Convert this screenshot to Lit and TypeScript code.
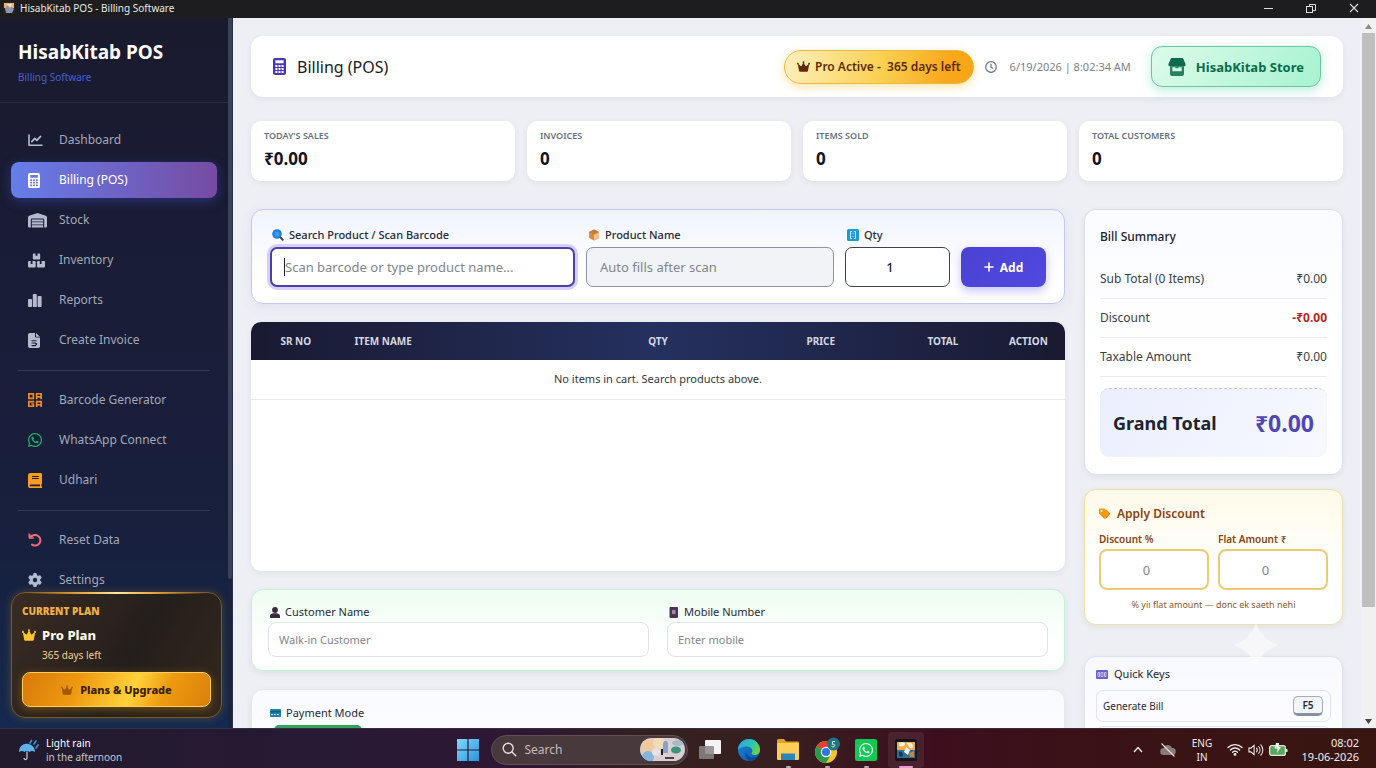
import { LitElement, html, css, nothing } from "lit";
import { customElement, state } from "lit/decorators.js";
import { classMap } from "lit/directives/class-map.js";

const CROWN =
  "M309 106c11.4-7 19-19.7 19-34c0-22.1-17.9-40-40-40s-40 17.9-40 40c0 14.4 7.6 27 19 34L209.7 220.6c-9.1 18.2-32.7 23.4-48.6 10.7L72 160c5-6.7 8-15 8-24c0-22.1-17.9-40-40-40S0 113.9 0 136s17.9 40 40 40c.2 0 .5 0 .7 0L86.4 427.4c5.5 30.4 32 52.6 63 52.6l277.2 0c30.9 0 57.4-22.1 63-52.6L535.3 176c.2 0 .5 0 .7 0c22.1 0 40-17.9 40-40s-17.9-40-40-40s-40 17.9-40 40c0 9 3 17.3 8 24l-89.1 71.3c-15.9 12.7-39.5 7.5-48.6-10.7L309 106z";
const GEAR =
  "M495.9 166.6c3.2 8.7 .5 18.4-6.4 24.6l-43.3 39.4c1.1 8.3 1.7 16.8 1.7 25.4s-.6 17.1-1.7 25.4l43.3 39.4c6.9 6.2 9.6 15.9 6.4 24.6c-4.4 11.9-9.7 23.3-15.8 34.3l-4.7 8.1c-6.6 11-14 21.4-22.1 31.2c-5.9 7.2-15.7 9.6-24.5 6.8l-55.7-17.7c-13.4 10.3-28.2 18.9-44 25.4l-12.5 57.1c-2 9.1-9 16.3-18.2 17.8c-13.8 2.3-28 3.5-42.5 3.5s-28.7-1.2-42.5-3.5c-9.2-1.5-16.2-8.7-18.2-17.8l-12.5-57.1c-15.8-6.5-30.6-15.1-44-25.4L83.1 425.9c-8.8 2.8-18.6 .3-24.5-6.8c-8.1-9.8-15.5-20.2-22.1-31.2l-4.7-8.1c-6.1-11-11.4-22.4-15.8-34.3c-3.2-8.7-.5-18.4 6.4-24.6l43.3-39.4C64.6 273.1 64 264.6 64 256s.6-17.1 1.7-25.4L22.4 191.2c-6.9-6.2-9.6-15.9-6.4-24.6c4.4-11.9 9.7-23.3 15.8-34.3l4.7-8.1c6.6-11 14-21.4 22.1-31.2c5.9-7.2 15.7-9.6 24.5-6.8l55.7 17.7c13.4-10.3 28.2-18.9 44-25.4l12.5-57.1c2-9.1 9-16.3 18.2-17.8C227.3 1.2 241.5 0 256 0s28.7 1.2 42.5 3.5c9.2 1.5 16.2 8.7 18.2 17.8l12.5 57.1c15.8 6.5 30.6 15.1 44 25.4l55.7-17.7c8.8-2.8 18.6-.3 24.5 6.8c8.1 9.8 15.5 20.2 22.1 31.2l4.7 8.1c6.1 11 11.4 22.4 15.8 34.3zM256 336a80 80 0 1 0 0-160 80 80 0 1 0 0 160z";
const WHATSAPP =
  "M380.9 97.1C339 55.1 283.2 32 223.9 32c-122.4 0-222 99.6-222 222 0 39.1 10.2 77.3 29.6 111L0 480l117.7-30.9c32.4 17.7 68.9 27 106.1 27h.1c122.3 0 224.1-99.6 224.1-222 0-59.3-25.2-115-67.1-157zm-157 341.6c-33.2 0-65.7-8.9-94-25.7l-6.7-4-69.8 18.3L72 359.2l-4.4-7c-18.5-29.4-28.2-63.3-28.2-98.2 0-101.7 82.8-184.5 184.6-184.5 49.3 0 95.6 19.2 130.4 54.1 34.8 34.9 56.2 81.2 56.1 130.5 0 101.8-84.9 184.6-186.6 184.6zm101.2-138.2c-5.5-2.8-32.8-16.2-37.9-18-5.1-1.9-8.8-2.8-12.5 2.8-3.7 5.6-14.3 18-17.6 21.8-3.2 3.7-6.5 4.2-12 1.4-32.6-16.3-54-29.1-75.5-66-5.7-9.8 5.7-9.1 16.3-30.3 1.8-3.7.9-6.9-.5-9.7-1.4-2.8-12.5-30.1-17.1-41.2-4.5-10.8-9.1-9.3-12.5-9.5-3.2-.2-6.9-.2-10.6-.2-3.7 0-9.7 1.4-14.8 6.9-5.1 5.6-19.4 19-19.4 46.3 0 27.3 19.9 53.7 22.6 57.4 2.8 3.7 39.1 59.7 94.8 83.8 35.2 15.2 49 16.5 66.6 13.9 10.7-1.6 32.8-13.4 37.4-26.4 4.6-13 4.6-24.1 3.2-26.4-1.3-2.5-5-3.9-10.5-6.6z";

const crown = (w: number, h: number) =>
  html`<svg class="ico" width=${w} height=${h} viewBox="0 24 576 464" preserveAspectRatio="none" fill="currentColor"><path d=${CROWN} /></svg>`;

const calculator = (w: number, h: number) => html`
  <svg class="ico" width=${w} height=${h} viewBox="0 0 12 16" preserveAspectRatio="none" fill="currentColor">
    <path
      fill-rule="evenodd"
      d="M2 0h8a2 2 0 0 1 2 2v12a2 2 0 0 1-2 2H2a2 2 0 0 1-2-2V2a2 2 0 0 1 2-2zm.2 2v3h7.600V2zm0 4.600v1.800h1.900V6.600zm2.900 0v1.800h1.800V6.600zm2.800 0v1.800h1.900V6.600zM2.200 9.400v1.800h1.900V9.400zm2.900 0v1.800h1.800V9.400zm2.800 0v1.800h1.900V9.400zM2.200 12.200V14h1.900v-1.800zm2.900 0V14h1.800v-1.800zm2.800 0V14h1.900v-1.800z"
    />
  </svg>
`;

const navIcons: Record<string, unknown> = {
  dashboard: html`<svg class="ico" width="15" height="13" viewBox="0 0 15 13" fill="none" stroke="currentColor" stroke-linecap="round" stroke-linejoin="round">
    <path stroke-width="1.6" d="M1 1v10.2h13" /><path stroke-width="1.7" d="M3.8 7.6l3-3.2 2 1.9 3.8-4" />
  </svg>`,
  billing: calculator(12, 15),
  stock: html`<svg class="ico" width="19" height="15" viewBox="0 0 19 15" fill="currentColor">
    <path fill-rule="evenodd" d="M0 13.500V4.400a1.800 1.800 0 0 1 1.100-1.600L8.800.2a2 2 0 0 1 1.400 0l7.700 2.600A1.800 1.800 0 0 1 19 4.400v9.100a1 1 0 0 1-1 1h-1.800V6.600a1 1 0 0 0-1-1H3.800a1 1 0 0 0-1 1v7.900H1a1 1 0 0 1-1-1z" />
    <path d="M3.800 6.400h11.400v2.200H3.800zM3.800 9.300h11.400v2.200H3.800zM3.800 12.200h11.400v2.300H3.800z" />
  </svg>`,
  inventory: html`<svg class="ico" width="17" height="15" viewBox="0 0 17 15" fill="currentColor">
    <path d="M4.800 1.500a1 1 0 0 1 1-1h1.700v2.200h2V.5h1.700a1 1 0 0 1 1 1v4a1 1 0 0 1-1 1H5.800a1 1 0 0 1-1-1zM0 9a1 1 0 0 1 1-1h1.700v3h1.800V8h2.200a1 1 0 0 1 1 1v4.500a1 1 0 0 1-1 1H1a1 1 0 0 1-1-1zM9 9a1 1 0 0 1 1-1h1.800v3h1.800V8H16a1 1 0 0 1 1 1v4.500a1 1 0 0 1-1 1h-6a1 1 0 0 1-1-1z" />
  </svg>`,
  reports: html`<svg class="ico" width="14" height="13" viewBox="0 0 14 13" fill="currentColor">
    <rect x="0" y="5" width="4" height="8" rx=".8" /><rect x="4.800" y="0" width="4" height="13" rx=".8" /><rect x="9.600" y="2" width="4" height="11" rx=".8" />
  </svg>`,
  invoice: html`<svg class="ico" width="12" height="15" viewBox="0 0 12 15" fill="currentColor">
    <path fill-rule="evenodd" d="M1.800 0H7v3.600a1 1 0 0 0 1 1h4v8.600A1.800 1.800 0 0 1 10.200 15H1.800A1.800 1.800 0 0 1 0 13.200V1.800A1.800 1.800 0 0 1 1.800 0zM3.500 7.200v1.100h5V7.200zm0 2.200v1h3.300l1 .9-.8.800H3.500v1.100h4l1.600-1.600v-1L7.500 9.400z" />
    <path d="M8 0l4 3.700H8z" />
  </svg>`,
  barcode: html`<svg class="ico" width="14" height="14" viewBox="0 0 14 14" fill="currentColor">
    <path fill-rule="evenodd" d="M0 0h6.200v6.200H0zM1.700 1.700v2.800h2.800V1.700zM7.800 0H14v6.200h-1.700V4.700H9.500v1.500H7.800zM9.500 1.600v1.500h2.800V1.600zM0 7.800h6.200v1.600H1.700v3h2.800v-.8H3.200v-1.400h3V14H0zM7.800 7.800H14V14h-1.700v-1.500H9.500V14H7.800zM9.500 9.400v1.500h2.800V9.400z" />
  </svg>`,
  whatsapp: html`<svg class="ico" width="14" height="14" viewBox="0 32 448 448" fill="currentColor"><path d=${WHATSAPP} /></svg>`,
  book: html`<svg class="ico" width="14" height="15" viewBox="0 0 14 15" fill="currentColor">
    <path fill-rule="evenodd" d="M2.600 0H13a1 1 0 0 1 1 1v9.500a1 1 0 0 1-.6.9v1.900H14V15H2.600A2.600 2.600 0 0 1 0 12.400V2.600A2.600 2.600 0 0 1 2.600 0zM4 3v1.100h6.700V3zm0 2.100v1h6.700v-1zM2.600 11.500a.9.9 0 0 0 0 1.800H12v-1.800z" />
  </svg>`,
  reset: html`<svg class="ico" width="14" height="14" viewBox="0 0 14 14" fill="none" stroke="currentColor" stroke-linecap="round">
    <path stroke-width="2" d="M2.800 4.200A5.300 5.300 0 1 1 4 11.600" /><path fill="currentColor" stroke-width="1" stroke-linejoin="round" d="M1 .9v4.300h4.300z" />
  </svg>`,
  settings: html`<svg class="ico" width="14" height="14" viewBox="0 0 512 512" fill="currentColor"><path d=${GEAR} /></svg>`,
};

interface NavItem {
  id: string;
  label: string;
  tone?: string;
}

const NAV: NavItem[][] = [
  [
    { id: "dashboard", label: "Dashboard" },
    { id: "billing", label: "Billing (POS)" },
    { id: "stock", label: "Stock" },
    { id: "inventory", label: "Inventory" },
    { id: "reports", label: "Reports" },
    { id: "invoice", label: "Create Invoice" },
  ],
  [
    { id: "barcode", label: "Barcode Generator", tone: "orange" },
    { id: "whatsapp", label: "WhatsApp Connect", tone: "green" },
    { id: "book", label: "Udhari", tone: "amber" },
  ],
  [
    { id: "reset", label: "Reset Data", tone: "red" },
    { id: "settings", label: "Settings" },
  ],
];

const STATS = [
  ["TODAY'S SALES", "₹0.00"],
  ["INVOICES", "0"],
  ["ITEMS SOLD", "0"],
  ["TOTAL CUSTOMERS", "0"],
];

const base = css`
  *, *::before, *::after { box-sizing: border-box; }
  :host { font-family: "Noto Sans", "Open Sans", sans-serif; }
  svg { display: block; flex: none; }
  button, input { font: inherit; color: inherit; }
  button { border: 0; background: none; padding: 0; margin: 0; }
  a { color: inherit; text-decoration: none; }
  h1, h2, p, dl, dd, dt { margin: 0; font-weight: inherit; font-size: inherit; }
`;

@customElement("pos-sidebar")
export class PosSidebar extends LitElement {
  @state() private active = "billing";

  static styles = [
    base,
    css`
      :host {
        display: flex;
        min-height: 0;
        background: linear-gradient(180deg, #1a1a2e 0%, #191d38 45%, #17203e 75%, #142a50 100%);
        color: #a3a8b8;
      }
      .column { flex: 1; min-width: 0; display: flex; flex-direction: column; min-height: 0; }
      .track { width: 5px; background: #1c2340; border-right: 1px solid #2a3048; }
      .thumb { height: 79%; background: #3b4158; border-radius: 0 0 3px 3px; }
      .brand { padding: 20px 18px 18px; height: 85px; border-bottom: 1px solid #292a42; }
      .name { font-size: 19px; line-height: 28px; font-weight: 700; color: #fff; white-space: nowrap; }
      .sub { font-size: 10px; line-height: 16px; margin-top: 3px; color: #4560d8; }
      nav { flex: 1; min-height: 0; overflow: hidden; padding: 19px 11px 0; display: flex; flex-direction: column; gap: 4px; }
      .item {
        flex: none; height: 36px; display: flex; align-items: center; border-radius: 8px;
        font-size: 12px; line-height: 18px; padding-left: 17px;
      }
      .glyph { width: 31px; flex: none; color: #b4bbcf; }
      .orange { color: #f08a24; }
      .green { color: #22b566; }
      .amber { color: #ff9c1a; }
      .red { color: #ee6a7c; }
      .item.active { color: #fff; background: linear-gradient(90deg, #667eea, #764ba2); box-shadow: 0 3px 12px rgba(70, 80, 220, 0.4); }
      .item.active .glyph { color: #fff; }
      .rule { flex: none; height: 1px; margin: 8px 7px 7px; background: #343a55; }
      .plan {
        position: relative; margin: 0 6px 10px 11px; padding: 10px; border: 1px solid #7a5a25; border-radius: 14px;
        background: linear-gradient(120deg, #3a2c22, #241f1c 55%, #33281c); box-shadow: 0 0 8px rgba(190, 130, 20, 0.35);
      }
      .plan::before {
        content: ""; position: absolute; left: 14px; right: 14px; top: -1px; height: 2px;
        background: linear-gradient(90deg, transparent, #e9a63a 30%, #ffe9a8 50%, #e9a63a 70%, transparent);
      }
      .caption { font-size: 10px; line-height: 16px; font-weight: 900; color: #f0b040; }
      .planname { display: flex; align-items: center; gap: 6px; margin-top: 6px; font-size: 13px; line-height: 20px; font-weight: 800; color: #fff8e6; }
      .planname .ico { color: #fcc62f; }
      .left { font-size: 10px; line-height: 16px; margin: 2px 0 9px 20px; color: #f2d28a; }
      .upgrade {
        width: 100%; height: 35px; display: flex; align-items: center; justify-content: center; gap: 7px; border-radius: 8px;
        border: 1px solid #ffcf5a; color: #3a2000; font-size: 11px; font-weight: 800; line-height: 16px;
        background: linear-gradient(115deg, #d9790a 0%, #ee9a10 30%, #ffd23a 58%, #ee9a10 75%, #d9800a 100%);
        box-shadow: 0 2px 8px rgba(230, 150, 10, 0.4);
      }
      .upgrade .ico { color: #a4560a; }
    `,
  ];

  render() {
    return html`
      <div class="column">
        <header class="brand">
          <h1 class="name">HisabKitab POS</h1>
          <p class="sub">Billing Software</p>
        </header>
        <nav aria-label="Main">
          ${NAV.map(
            (group, i) => html`
              ${i ? html`<div class="rule"></div>` : nothing}
              ${group.map(
                (n) => html`<a
                  href="#${n.id}"
                  class=${classMap({ item: true, active: n.id === this.active })}
                  @click=${() => (this.active = n.id)}
                  ><span class="glyph ${n.tone ?? ""}">${navIcons[n.id]}</span>${n.label}</a
                >`,
              )}
            `,
          )}
        </nav>
        <section class="plan">
          <p class="caption">CURRENT PLAN</p>
          <p class="planname">${crown(14, 12)}Pro Plan</p>
          <p class="left">365 days left</p>
          <button class="upgrade" type="button">${crown(12, 10)}Plans &amp; Upgrade</button>
        </section>
      </div>
      <div class="track"><div class="thumb"></div></div>
    `;
  }
}

@customElement("pos-taskbar")
export class PosTaskbar extends LitElement {
  static styles = [
    base,
    css`
      :host {
        display: grid; grid-template-columns: 1fr auto 1fr; align-items: center; color: #f0ecee;
        background: linear-gradient(90deg, #211b2d 0%, #271a34 22%, #2e1734 38%, #33211f 47%, #371f1f 56%, #3d0f1e 68%, #3a1216 80%, #391610 100%);
        border-top: 1px solid #35303f; padding-top: 2px; font-size: 11px; line-height: 14px;
      }
      .weather { display: flex; align-items: center; gap: 7px; padding-left: 18px; font-size: 10px; color: #c9c4cc; text-align: left; }
      .weather b { display: block; font-weight: 400; color: #fff; }
      .weather small { font-size: 10px; }
      .apps { display: flex; align-items: center; margin-left: 3px; }
      .app { position: relative; width: 39px; height: 36px; display: grid; place-items: center; border-radius: 4px; }
      .app.open::after, .app.current::after { content: ""; position: absolute; bottom: 0; left: 17px; width: 5px; height: 2px; border-radius: 1px; background: #b9a9ae; }
      .app.current { width: 36px; margin-left: 2px; background: rgba(255, 255, 255, 0.07); }
      .app.current::after { left: 11px; width: 14px; background: #e79ad6; }
      .start { width: 24px; margin-right: 11px; }
      .search {
        width: 197px; height: 30px; margin-right: 3px; display: flex; align-items: center; gap: 8px; border-radius: 15px; padding: 0 2px 0 10px;
        border: 1px solid #5f4f55; background: #48393d; color: #c4bcbf;
      }
      .search input { flex: 1; min-width: 0; border: 0; background: none; outline: 0; padding: 0; font-size: 12px; line-height: 18px; }
      .search input::placeholder { color: #c4bcbf; opacity: 1; }
      .tray { justify-self: end; display: flex; align-items: center; padding-right: 17px; text-align: center; white-space: nowrap; }
      .lang { width: 26px; margin: 0 12px 0 13px; font-size: 10px; }
      .clock { min-width: 60px; text-align: right; font-size: 11px; margin-left: 6px; }
      .tray > svg { margin-right: 5px; }
      .tray > .chev { margin-right: 17px; }
      .tray > .cloud { margin-right: 0; }
    `,
  ];

  render() {
    return html`
      <button class="weather" type="button">
        <svg width="21" height="22" viewBox="0 0 21 22">
          <path d="M1 13C1 7 6 4 10 5c4 .5 7 3.500 7 8-2-1.500-4-1.500-5.300 0C10 11.500 7.500 11.500 6.300 13 4.800 11.700 3 11.700 1 13z" fill="#5db2ee" />
          <path d="M9 12.500V19a1.500 1.500 0 0 1-3 0" fill="none" stroke="#b9c4d4" stroke-width="1.300" />
          <path d="M12 4l1.500-2.500M16 5l2-3M18 9l2-3" stroke="#3b88d8" stroke-width="1.700" stroke-linecap="round" />
        </svg>
        <span><b>Light rain</b><small>in the afternoon</small></span>
      </button>
      <div class="apps">
        <button class="app start" type="button" aria-label="Start">
          <svg width="22" height="22" viewBox="0 0 22 22">
            <defs><linearGradient id="w" x2="1" y2="1"><stop stop-color="#7fd8fb" /><stop offset="1" stop-color="#2a95dd" /></linearGradient></defs>
            <path fill="url(#w)" d="M0 0h10.400v10.400H0zM11.600 0H22v10.400H11.600zM0 11.600h10.400V22H0zM11.600 11.600H22V22H11.600z" />
          </svg>
        </button>
        <label class="search">
          <svg width="15" height="15" viewBox="0 0 15 15" fill="none" stroke="#e6e0e2" stroke-width="1.400" stroke-linecap="round"><circle cx="6.200" cy="6.200" r="5" /><path d="M10 10l3.800 3.800" /></svg>
          <input type="text" placeholder="Search" aria-label="Search" />
          <svg width="45" height="23" viewBox="0 0 45 23">
            <defs><clipPath id="p"><rect width="45" height="23" rx="11.500" /></clipPath></defs>
            <g clip-path="url(#p)">
              <rect width="45" height="23" fill="#d9cfd0" /><circle cx="9" cy="9" r="8" fill="#f0c9a0" /><circle cx="19" cy="5" r="6" fill="#f1dcb8" />
              <circle cx="8" cy="19" r="6" fill="#84b5dc" /><path d="M23 15V6l1-3h3l1 3v9z" fill="#8aa0c4" /><rect x="21" y="11" width="2" height="6" fill="#222" />
              <ellipse cx="36" cy="12" rx="5" ry="3.500" fill="#38927c" /><ellipse cx="38" cy="5" rx="6" ry="3" fill="#a9bad0" /><path d="M25 19h9v2h-9z" fill="#45414c" /><circle cx="16" cy="14" r="4" fill="#ecdfe4" />
            </g>
          </svg>
        </label>
        <button class="app" type="button" aria-label="Task view">
          <svg width="22" height="20" viewBox="0 0 22 20"><rect x="6" y="0" width="16" height="14" rx="1" fill="#f4f2f2" /><rect x="0" y="6" width="15" height="13" rx="1" fill="#8d8686" opacity=".85" /></svg>
        </button>
        <button class="app" type="button" aria-label="Edge">
          <svg width="22" height="22" viewBox="0 0 22 22">
            <defs>
              <linearGradient id="e1" x2="1" y2=".6"><stop stop-color="#2aa3e8" /><stop offset=".6" stop-color="#2fc4b0" /><stop offset="1" stop-color="#63d44a" /></linearGradient>
              <linearGradient id="e2" y2="1"><stop stop-color="#1b86d8" /><stop offset="1" stop-color="#0c58b0" /></linearGradient>
            </defs>
            <circle cx="11" cy="11" r="11" fill="url(#e2)" />
            <path fill="url(#e1)" d="M0 11A11 11 0 0 1 22 11c0 3.500-2.500 5-5.200 5-2.500 0-3.600-1-3.300-2 .8-1 1-2 .8-3C13.800 8.500 11 7.500 8.500 7.500 4.500 7.500 1 9 0 11z" />
            <path fill="#0d4a94" d="M8 12c0 4 3.500 6.500 7.500 6.500 1.500 0 2.800-.3 4-1C17.500 20 15 21.800 12 22 8 20.500 6.500 16 8 12z" />
          </svg>
        </button>
        <button class="app open" type="button" aria-label="File Explorer">
          <svg width="22" height="21" viewBox="0 0 22 21"><path fill="#e0a021" d="M0 1.500A1.500 1.500 0 0 1 1.500 0H7l2 2.500h12A1 1 0 0 1 22 3.500V10H0z" /><rect y="4" width="22" height="17" rx="1.200" fill="#fbcf57" /><path fill="#2a86b8" d="M4 14.500h14V21H4z" /></svg>
        </button>
        <button class="app open" type="button" aria-label="Chrome">
          <svg width="28" height="26" viewBox="0 0 28 26">
            <circle cx="13" cy="15" r="11" fill="#f5c32c" /><path d="M13 15L3.500 9.500A11 11 0 0 1 22.500 9.500z" fill="#e0412f" /><path d="M13 15L3.500 9.500A11 11 0 0 0 13 26l3.500-6z" fill="#2b9a4b" />
            <circle cx="13" cy="15" r="5.200" fill="#fff" /><circle cx="13" cy="15" r="4.100" fill="#3275e0" /><circle cx="20.500" cy="7" r="6.500" fill="#1f7683" />
            <path d="M18.500 9.500c2 1 3.500 0 3.300-1.300-.3-1.200-1.800-1.200-2.600-.7l.4-3h2.600" stroke="#d7f0f0" fill="none" />
          </svg>
        </button>
        <button class="app open" type="button" aria-label="WhatsApp">
          <svg width="22" height="22" viewBox="0 0 22 22"><rect width="22" height="22" rx="2" fill="#12c956" /><svg x="4" y="4" width="14" height="14" viewBox="0 32 448 448" fill="#e9fff0"><path d=${WHATSAPP} /></svg></svg>
        </button>
        <button class="app current" type="button" aria-label="HisabKitab POS">
          <svg width="22" height="22" viewBox="0 0 22 22"><rect width="22" height="22" rx="2.500" fill="#16141c" /><path d="M2 3h18v8H2z" fill="#f0ae48" /><path d="M2 11h18v8H2z" fill="#2f6f9c" /><path d="M4 4c2-2 6-1 6 1s-3 3-6 2zM12 4c3-1 6 0 6 3s-3 3-4 1z" fill="#f7eedd" /><path d="M11 8l4 3-2 5-4-3z" fill="#f3f1ee" /><path d="M4 13c2-1 4 1 4 3s-3 2-4 1z" fill="#1b3550" /><path d="M14 14l5-2v6h-4z" fill="#d5822a" /></svg>
        </button>
      </div>
      <div class="tray">
        <svg class="chev" width="10" height="7" viewBox="0 0 10 7" fill="none" stroke="#eee" stroke-width="1.300"><path d="M1 6l4-4.500L9 6" /></svg>
        <svg class="cloud" width="16" height="16" viewBox="0 0 16 16"><path d="M4 13a3.500 3.500 0 0 1-.5-7A4.500 4.500 0 0 1 12 6a3.500 3.500 0 0 1 .5 7z" fill="#8a7c7c" /><path d="M1.500 1.500l13 13" stroke="#e4dada" stroke-width="1.300" /></svg>
        <div class="lang">ENG<br />IN</div>
        <svg width="16" height="13" viewBox="0 0 16 13" fill="none" stroke="#f2eeee" stroke-width="1.300" stroke-linecap="round"><path d="M1 4.500a10 10 0 0 1 14 0M3.300 7a6.500 6.500 0 0 1 9.400 0M5.600 9.300a3.400 3.400 0 0 1 4.800 0" /><circle cx="8" cy="11.400" r=".8" fill="#f2eeee" /></svg>
        <svg width="16" height="14" viewBox="0 0 17 14" fill="none" stroke="#f2eeee" stroke-width="1.100" stroke-linecap="round"><path d="M1 5v4h2l3.500 3V2L3 5zM9 5a3 3 0 0 1 0 4M11.300 3.300a5.500 5.500 0 0 1 0 7.400M13.600 1.500a8 8 0 0 1 0 11" /></svg>
        <svg width="19" height="13" viewBox="0 0 19 13"><rect x=".6" y="2.600" width="15.800" height="9.800" rx="2" fill="#5aa860" stroke="#dfe8df" stroke-width="1.200" /><path d="M17 6h1.500v3H17z" fill="#dfe8df" /><path d="M7 0h3v4h2l-4 6 .5-4.500H5.500z" fill="#e9efe9" /></svg>
        <div class="clock">08:02<br />19-06-2026</div>
      </div>
    `;
  }
}

@customElement("app-root")
export class AppRoot extends LitElement {
  static styles = [
    base,
    css`
      :host { display: grid; height: 100vh; grid-template-rows: 18px minmax(0, 1fr) 40px; overflow: hidden; color: #1e2330; }
      .titlebar { display: flex; align-items: center; gap: 5px; padding: 0 16px 3px 3px; background: #1d1c1e; color: #e8e8e8; font-size: 10px; line-height: 14px; }
      .titlebar p { flex: 1; }
      .winctl { display: flex; gap: 31px; color: #ddd; }
      .body { display: grid; grid-template-columns: 233px minmax(0, 1fr) 15px; min-height: 0; }
      .scroll { background: #f1f1f2; display: flex; flex-direction: column; align-items: center; padding: 6px 0 4px; }
      .bar { width: 13px; flex: 0 0 82%; margin: 4px 0 auto; background: #bfbfc0; }
      main { position: relative; overflow: hidden; padding: 18px 18px 0; background: #eeeff4; }
      .card { background: #fff; border-radius: 12px; box-shadow: 0 2px 6px rgba(30, 40, 80, 0.07); }
      .top { display: flex; align-items: center; height: 61px; padding: 0 22px; }
      .top .calc { color: #4a35b4; }
      .heading { flex: 1; margin-left: 11px; font-size: 16px; line-height: 24px; font-weight: 400; color: #161a26; }
      .pro {
        display: flex; align-items: center; gap: 5px; height: 34px; padding: 0 12px; border-radius: 17px; border: 1px solid #e6b84a; white-space: pre;
        color: #5b2c05; font-size: 12px; font-weight: 600; line-height: 18px;
        background: linear-gradient(100deg, #fef0bd 0%, #fbd153 50%, #f9a81c 85%, #f8a415 100%); box-shadow: 0 3px 10px rgba(251, 191, 36, 0.4);
      }
      .now { display: flex; align-items: center; gap: 13px; margin: 0 20px 0 11px; font-size: 11px; line-height: 18px; color: #7d8188; }
      .store {
        display: flex; align-items: center; gap: 10px; height: 41px; padding: 0 16px; border-radius: 11px; border: 1px solid #6cc4a0;
        background: linear-gradient(120deg, #dcfbea, #a7f3cf); color: #0b6b4c; font-size: 13px; font-weight: 700; line-height: 20px;
        box-shadow: 0 3px 12px rgba(52, 211, 153, 0.35);
      }
      .stats { display: grid; grid-template-columns: repeat(4, 1fr); gap: 12px; margin-top: 24px; }
      .stat { height: 60px; padding: 8px 13px; border-radius: 10px; }
      .stat dt { font-size: 9px; line-height: 14px; color: #64727f; font-weight: 600; }
      .stat dd { font-size: 17px; line-height: 24px; margin-top: 4px; font-weight: 700; color: #11141f; }
      .board { display: grid; grid-template-columns: minmax(0, 1fr) 259px; gap: 19px; margin-top: 28px; align-items: start; }
      .left { display: grid; gap: 18px; }
      .right { display: grid; gap: 14px; }
      label, .label { display: flex; align-items: center; gap: 5px; font-size: 11px; line-height: 18px; font-weight: 500; color: #262c38; }
      .entry {
        display: grid; grid-template-columns: minmax(0, 305fr) minmax(0, 248fr) 105px 85px; gap: 11px; align-items: end; padding: 16px 18px;
        border: 1px solid #c3c8f0; background: linear-gradient(180deg, #f1f4ff, #fff 70%); box-shadow: 0 3px 12px rgba(99, 102, 241, 0.1);
      }
      .field { display: grid; gap: 3px; min-width: 0; position: relative; }
      .entry label { padding-left: 2px; }
      input { min-width: 0; width: 100%; outline: 0; background: #fff; }
      .entry input { height: 40px; border-radius: 7px; border: 1px solid #3b4252; padding: 0 13px; font-size: 13px; line-height: 20px; }
      input::placeholder { color: #82868c; opacity: 1; }
      .entry .scan { border: 2px solid #4b3fae; box-shadow: 0 0 0 3px #d6d0f8; }
      .entry .auto { background: #f1f3f6; border-color: #8a94a6; }
      .entry .qty { text-align: center; font-weight: 500; padding: 0 11px; }
      .pair input { text-align: center; }
      .caret { position: absolute; left: 14px; bottom: 11px; width: 1px; height: 18px; background: #222; }
      .add {
        height: 40px; border-radius: 8px; display: flex; align-items: center; justify-content: center; gap: 6px; color: #fff; font-size: 12px; font-weight: 700;
        background: linear-gradient(135deg, #4a42d2, #5148e0); box-shadow: 0 4px 10px rgba(79, 70, 229, 0.32);
      }
      .cart { min-height: 249px; overflow: hidden; border-radius: 10px; }
      table { width: 100%; border-collapse: collapse; table-layout: fixed; }
      thead tr { background: linear-gradient(90deg, #191a31, #24305f 50%, #191a31); }
      th { height: 38px; padding: 0; font-size: 10px; line-height: 16px; font-weight: 700; color: #d4d7e2; }
      .c-sr { width: 11%; }
      .c-item { width: 28%; text-align: left; padding-left: 14px; }
      .c-qty { width: 22%; }
      .c-price { width: 18%; }
      .c-total { width: 12%; }
      .c-act { width: 9%; }
      td { height: 39px; padding: 0; text-align: center; font-size: 11px; line-height: 18px; color: #33383f; border-bottom: 1px solid #e7e9ed; }
      .customer {
        display: grid; grid-template-columns: 1fr 1fr; gap: 18px; padding: 13px 16px; border: 1px solid #c6efd5;
        background: linear-gradient(180deg, #eefdf2, #fff 70%);
      }
      .customer .field { gap: 1px; }
      .customer label, .pay .label { padding-left: 2px; font-weight: 400; }
      .customer input { height: 35px; border-radius: 8px; border: 1px solid #dfe2e8; padding: 0 10px; font-size: 11px; line-height: 18px; }
      .pay { padding: 14px 16px; border: 1px solid #e3e6f3; background: linear-gradient(180deg, #f9faff, #fff); }
      .mode { display: block; margin: 3px 0 0 6px; width: 88px; height: 34px; border-radius: 5px; background: #35a35d; }
      .bill { padding: 16px 15px 17px; border: 1px solid #dadcf2; background: linear-gradient(180deg, #fafbff, #fff 60%); }
      .bill h2 { font-size: 12px; line-height: 22px; font-weight: 500; margin-bottom: 12px; }
      .line { display: flex; justify-content: space-between; align-items: center; height: 39px; border-bottom: 1px solid #eaebef; font-size: 12px; line-height: 18px; color: #3a3f47; }
      .minus { color: #b3261e; font-weight: 700; }
      .grand {
        display: flex; justify-content: space-between; align-items: center; height: 69px; margin-top: 11px; padding: 0 13px; border-radius: 9px;
        border-top: 1px dashed #bfc6e4; background: linear-gradient(120deg, #ebeefd, #f7f9fe); font-weight: 700; font-size: 18px; line-height: 26px;
      }
      .grand dd { color: #5046b8; font-size: 23px; line-height: 30px; }
      .discount { padding: 14px 14px 12px; border: 1px solid #f3dfa0; background: linear-gradient(180deg, #fffae8, #fff 60%); color: #8a4210; }
      .discount h2 { display: flex; align-items: center; gap: 6px; font-size: 12px; line-height: 20px; font-weight: 600; margin-bottom: 6px; }
      .pair { display: grid; grid-template-columns: 1fr 1fr; gap: 9px; }
      .pair .field { gap: 1px; }
      .pair label { font-size: 10px; line-height: 18px; font-weight: 600; color: #8a4210; }
      .pair input { height: 41px; border-radius: 8px; border: 2px solid #eecb72; font-size: 13px; padding: 0 4px; color: #555; }
      .hint { font-size: 9px; line-height: 14px; margin-top: 8px; text-align: center; color: #8a5a2c; }
      .keys { margin-top: 17px; padding: 8px 11px; border: 1px solid #dfe1f4; background: linear-gradient(180deg, #f8f9ff, #fff); }
      .keys h2 { display: flex; align-items: center; gap: 6px; font-size: 11px; line-height: 18px; font-weight: 400; margin-bottom: 7px; }
      .key { display: flex; justify-content: space-between; align-items: center; height: 32px; margin-bottom: 4px; padding: 0 7px 0 6px; border: 1px solid #dfe4ee; border-radius: 7px; font-size: 10px; line-height: 14px; font-weight: 400; color: #262c38; }
      kbd { font: inherit; font-weight: 600; width: 30px; height: 20px; line-height: 16px; text-align: center; border: 1px solid #a5adbd; border-bottom: 3px solid #8791a5; border-radius: 5px; background: #f2f5f9; }
      .spark { position: absolute; right: 82px; top: 604px; color: #fff; opacity: 0.55; }
    `,
  ];

  render() {
    return html`
      <header class="titlebar">
        <svg width="12" height="12" viewBox="0 0 12 12"><rect width="12" height="12" rx="1" fill="#2a2026" /><path d="M1 1h10v5H1z" fill="#e9b56a" /><path d="M2 6l4-3 5 4-2 4H3z" fill="#8b97b0" /><path d="M4 2h5l-2 4z" fill="#f5e3c0" /></svg>
        <p>HisabKitab POS - Billing Software</p>
        <div class="winctl">
          <svg width="12" height="12" viewBox="0 0 12 12" stroke="currentColor"><path d="M2 6.500h9" /></svg>
          <svg width="12" height="12" viewBox="0 0 12 12" fill="none" stroke="currentColor"><rect x="1.500" y="4.500" width="6" height="6" /><path d="M4.500 4.500v-2h6v6h-3" /></svg>
          <svg width="12" height="12" viewBox="0 0 12 12" stroke="currentColor" stroke-width="1.100"><path d="M2 2l8 8M10 2l-8 8" /></svg>
        </div>
      </header>
      <div class="body">
        <pos-sidebar></pos-sidebar>
        <main>
          <header class="card top">
            <span class="calc">${calculator(13, 17)}</span>
            <h1 class="heading">Billing (POS)</h1>
            <div class="pro">${crown(13, 11)}<span>Pro Active -  365 days left</span></div>
            <div class="now">
              <svg width="12" height="12" viewBox="0 0 12 12" fill="none" stroke="#667380" stroke-width="1.200"><circle cx="6" cy="6" r="5.300" /><path d="M6 2.800V6.200L8 7.400" /></svg>
              <time>6/19/2026 | 8:02:34 AM</time>
            </div>
            <button class="store" type="button">
              <svg width="18" height="18" viewBox="0 0 18 18" fill="currentColor">
                <path d="M4 0h10a1.500 1.500 0 0 1 1.400.9L17.500 6v1.200a1 1 0 0 1-1 1h-15a1 1 0 0 1-1-1V6L2.600.9A1.500 1.500 0 0 1 4 0z" />
                <path fill-rule="evenodd" d="M2 8.200h14V16a2 2 0 0 1-2 2H4a2 2 0 0 1-2-2zm2.300 1v4h9.400v-4z" opacity=".85" />
                <path d="M7.500 9.200h3v1h-3z" />
              </svg>
              HisabKitab Store
            </button>
          </header>

          <div class="stats">
            ${STATS.map(([k, v]) => html`<dl class="card stat"><dt>${k}</dt><dd>${v}</dd></dl>`)}
          </div>

          <div class="board">
            <div class="left">
              <form class="card entry" @submit=${(e: Event) => e.preventDefault()}>
                <div class="field">
                  <label for="scan">
                    <svg width="12" height="12" viewBox="0 0 12 12"><circle cx="5" cy="5" r="4.800" fill="#1d7fe0" /><circle cx="5" cy="5" r="2.600" fill="#3c9cf0" /><path d="M8.800 8.800l1.900 1.900" stroke="#3f4654" stroke-width="2" stroke-linecap="round" /></svg>
                    Search Product / Scan Barcode
                  </label>
                  <input id="scan" class="scan" type="text" placeholder="Scan barcode or type product name..." />
                  <span class="caret"></span>
                </div>
                <div class="field">
                  <label for="pname">
                    <svg width="12" height="12" viewBox="0 0 12 12"><path d="M1 3l5-2.500L11 3v6l-5 2.600L1 9z" fill="#d98d48" /><path d="M6 5.500L11 3v6l-5 2.600z" fill="#f0c08c" /><path d="M1 3l5-2.500L11 3 6 5.500z" fill="#c87a38" /></svg>
                    Product Name
                  </label>
                  <input id="pname" class="auto" type="text" readonly placeholder="Auto fills after scan" />
                </div>
                <div class="field">
                  <label for="qty">
                    <svg width="12" height="12" viewBox="0 0 12 12"><rect width="12" height="12" rx="1.500" fill="#1e9bd6" /><path d="M5 2.500H3.500v7H5M7 2.500h1.500v7H7M6 4v1M6 7v1" fill="none" stroke="#d6f1ff" stroke-width=".9" /></svg>
                    Qty
                  </label>
                  <input id="qty" class="qty" type="number" value="1" />
                </div>
                <button class="add" type="submit">
                  <svg width="10" height="10" viewBox="0 0 10 10" stroke="#fff" stroke-width="1.600" stroke-linecap="round"><path d="M5 1v8M1 5h8" /></svg>Add
                </button>
              </form>

              <section class="card cart">
                <table>
                  <thead>
                    <tr>
                      <th class="c-sr">SR NO</th><th class="c-item">ITEM NAME</th><th class="c-qty">QTY</th>
                      <th class="c-price">PRICE</th><th class="c-total">TOTAL</th><th class="c-act">ACTION</th>
                    </tr>
                  </thead>
                  <tbody><tr><td colspan="6">No items in cart. Search products above.</td></tr></tbody>
                </table>
              </section>

              <section class="card customer">
                <div class="field">
                  <label for="cname">
                    <svg width="10" height="11" viewBox="0 0 10 11" fill="#3b2a3c"><circle cx="5" cy="3" r="2.900" /><path d="M0 11V9c0-2 2-2.500 3.500-2.800h3C8 6.500 10 7 10 9v2z" /></svg>
                    Customer Name
                  </label>
                  <input id="cname" type="text" placeholder="Walk-in Customer" />
                </div>
                <div class="field">
                  <label for="mobile">
                    <svg width="10" height="11" viewBox="0 0 10 11"><rect x=".5" width="8.500" height="11" rx="1" fill="#4a3450" /><rect x="3" y="3" width="3.500" height="4" fill="#9a8bb0" /></svg>
                    Mobile Number
                  </label>
                  <input id="mobile" type="tel" placeholder="Enter mobile" />
                </div>
              </section>

              <section class="card pay">
                <p class="label">
                  <svg width="11" height="8" viewBox="0 0 11 8"><rect width="11" height="8" rx="1" fill="#1d84a8" /><path d="M0 2h11v1.500H0z" fill="#155a7c" /><path d="M1 5.500h9" stroke="#cfeaf2" stroke-dasharray="2 1" /></svg>
                  Payment Mode
                </p>
                <button class="mode" type="button" aria-label="Cash"></button>
              </section>
            </div>

            <aside class="right">
              <section class="card bill">
                <h2>Bill Summary</h2>
                <dl>
                  <div class="line"><dt>Sub Total (0 Items)</dt><dd>₹0.00</dd></div>
                  <div class="line"><dt>Discount</dt><dd class="minus">-₹0.00</dd></div>
                  <div class="line"><dt>Taxable Amount</dt><dd>₹0.00</dd></div>
                  <div class="grand"><dt>Grand Total</dt><dd>₹0.00</dd></div>
                </dl>
              </section>

              <section class="card discount">
                <h2>
                  <svg width="12" height="12" viewBox="0 0 12 12"><path d="M6.500 1l5 4.800-5 5.400z" fill="#d9780a" /><path fill-rule="evenodd" d="M0 .5h5.500l5 5.200-5 5.300L0 5.800zM2.600 2a1 1 0 1 0 0 2 1 1 0 0 0 0-2z" fill="#f59a12" /></svg>
                  Apply Discount
                </h2>
                <div class="pair">
                  <div class="field"><label for="dpct">Discount %</label><input id="dpct" type="number" placeholder="0" /></div>
                  <div class="field"><label for="dflat">Flat Amount ₹</label><input id="dflat" type="number" placeholder="0" /></div>
                </div>
                <p class="hint">% yiı flat amount — donc ek saeth nehi</p>
              </section>

              <section class="card keys">
                <h2>
                  <svg width="12" height="9" viewBox="0 0 12 9"><rect width="12" height="9" rx="1" fill="#6a62cf" /><path d="M2 2.500h1.500v4H2zM5 2.500h2v4H5zM8.500 2.500h1.500v4H8.500z" fill="none" stroke="#d9d6fa" stroke-width=".8" /></svg>
                  Quick Keys
                </h2>
                <div class="key">Generate Bill<kbd>F5</kbd></div>
                <div class="key"></div>
              </section>
            </aside>
          </div>
          <svg class="spark" width="46" height="46" viewBox="0 0 44 44" fill="currentColor"><path d="M22 0c3 11 11 19 22 22-11 3-19 11-22 22C19 33 11 25 0 22 11 19 19 11 22 0z" /></svg>
        </main>
        <div class="scroll" aria-hidden="true">
          <svg width="7" height="5" viewBox="0 0 7 5" fill="#8a8a8a"><path d="M3.500 0L7 5H0z" /></svg>
          <div class="bar"></div>
          <svg width="7" height="5" viewBox="0 0 7 5" fill="#444"><path d="M3.500 5L7 0H0z" /></svg>
        </div>
      </div>
      <pos-taskbar></pos-taskbar>
    `;
  }
}
